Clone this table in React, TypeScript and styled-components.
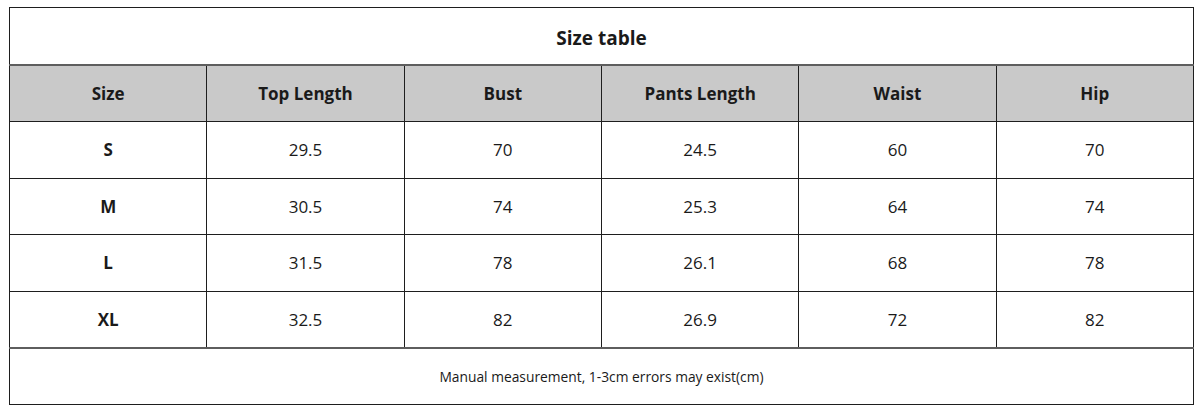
import React from 'react';
import styled, { createGlobalStyle } from 'styled-components';

const GlobalStyle = createGlobalStyle`
  body {
    margin: 0;
    background: #ffffff;
    font-family: "Open Sans", "Liberation Sans", sans-serif;
  }
`;

const Page = styled.div`
  width: 1200px;
  height: 410px;
  padding: 7px 0 0 9px;
  box-sizing: border-box;
  background: #ffffff;
`;

const Table = styled.table`
  width: 1185px;
  table-layout: fixed;
  border-collapse: collapse;
  border: 1.5px solid #1e1e1e;
  color: #1a1a1a;
`;

const TitleCell = styled.th`
  height: 53px;
  font-size: 19px;
  font-weight: 700;
  text-align: center;
  border-bottom: 2px solid #5e5e5e;
  padding: 3px 0 0;
`;

const HeadRow = styled.tr`
  background: #c9c9c9;
`;

const HeadCell = styled.th`
  height: 55px;
  font-size: 17px;
  font-weight: 700;
  text-align: center;
  padding: 0;
  border-left: 1.5px solid #1e1e1e;
  border-bottom: 1.5px solid #1e1e1e;

  &:first-child {
    border-left: none;
  }
`;

const Cell = styled.td<{ $bold?: boolean }>`
  height: 55.6px;
  font-size: 17px;
  font-weight: ${(p) => (p.$bold ? 700 : 400)};
  text-align: center;
  padding: 0;
  border-left: 1.5px solid #1e1e1e;
  border-bottom: 1.5px solid #1e1e1e;

  &:first-child {
    border-left: none;
  }
`;

const NoteCell = styled.td`
  height: 55px;
  font-size: 13.8px;
  text-align: center;
  padding: 0;
  border-top: 2px solid #5e5e5e;
`;

const columns = ['Size', 'Top Length', 'Bust', 'Pants Length', 'Waist', 'Hip'];

const rows = [
  ['S', '29.5', '70', '24.5', '60', '70'],
  ['M', '30.5', '74', '25.3', '64', '74'],
  ['L', '31.5', '78', '26.1', '68', '78'],
  ['XL', '32.5', '82', '26.9', '72', '82'],
];

const App = () => {
  return (
    <Page>
      <GlobalStyle />
      <Table>
        <thead>
          <tr>
            <TitleCell colSpan={6}>Size table</TitleCell>
          </tr>
          <HeadRow>
            {columns.map((c) => (
              <HeadCell key={c}>{c}</HeadCell>
            ))}
          </HeadRow>
        </thead>
        <tbody>
          {rows.map((r) => (
            <tr key={r[0]}>
              {r.map((v, i) => (
                <Cell key={i} $bold={i === 0}>
                  {v}
                </Cell>
              ))}
            </tr>
          ))}
          <tr>
            <NoteCell colSpan={6}>Manual measurement, 1-3cm errors may exist(cm)</NoteCell>
          </tr>
        </tbody>
      </Table>
    </Page>
  );
};

export default App;
